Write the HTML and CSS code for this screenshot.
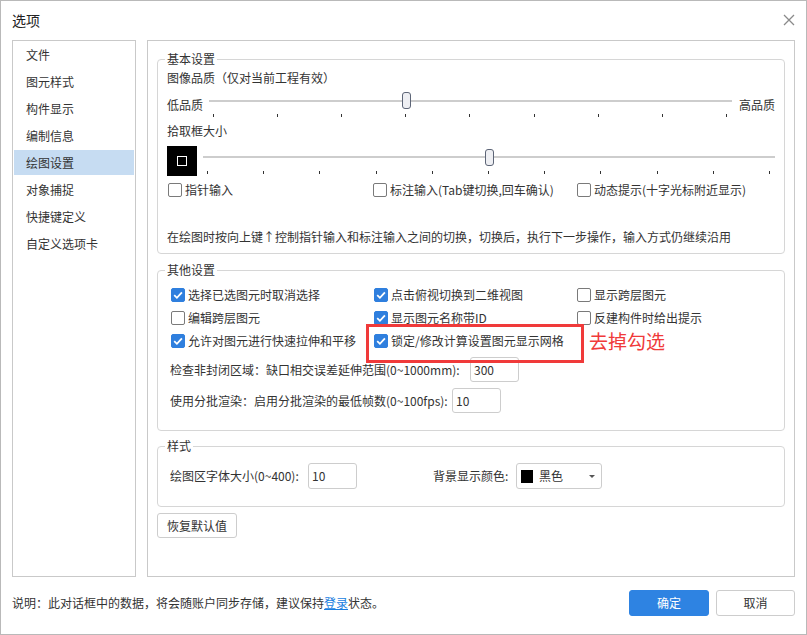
FILE: index.html
```html
<!DOCTYPE html>
<html lang="zh-CN">
<head>
  <meta charset="UTF-8">
  <title>选项</title>
  <link rel="stylesheet" href="styles.css">
</head>
<body>
  <div class="dialog">
    <div class="titlebar">
      <span class="title">选项</span>
      <svg class="close" width="12" height="12" viewBox="0 0 12 12"><path d="M1 1L11 11M11 1L1 11" stroke="#8a8a8a" stroke-width="1.3" fill="none"/></svg>
    </div>

    <div class="main">
      <ul class="nav">
        <li>文件</li>
        <li>图元样式</li>
        <li>构件显示</li>
        <li>编制信息</li>
        <li class="active">绘图设置</li>
        <li>对象捕捉</li>
        <li>快捷键定义</li>
        <li>自定义选项卡</li>
      </ul>

      <div class="panel">
        <fieldset class="group group-basic">
          <legend>基本设置</legend>
          <div class="caption">图像品质（仅对当前工程有效）</div>
          <div class="slider-row row-quality">
            <span class="side">低品质</span>
            <div class="slider">
              <div class="track"></div>
              <div class="ticks">
                <span class="thumb" style="left: 37.5%"></span>
                <i></i><i></i><i></i><i></i><i></i><i></i><i></i><i></i><i></i>
              </div>
            </div>
            <span class="side">高品质</span>
          </div>
          <div class="caption caption-pick">拾取框大小</div>
          <div class="slider-row row-pick">
            <span class="pick-box"><span></span></span>
            <div class="slider">
              <div class="track"></div>
              <div class="ticks">
                <span class="thumb" style="left: 50%"></span>
                <i></i><i></i><i></i><i></i><i></i><i></i><i></i><i></i><i></i><i></i><i></i>
              </div>
            </div>
          </div>
          <div class="checks checks-basic">
            <label class="check"><span class="cb"></span>指针输入</label>
            <label class="check"><span class="cb"></span>标注输入(Tab键切换,回车确认)</label>
            <label class="check"><span class="cb"></span>动态提示(十字光标附近显示)</label>
          </div>
          <div class="note">在绘图时按向上键↑控制指针输入和标注输入之间的切换，切换后，执行下一步操作，输入方式仍继续沿用</div>
        </fieldset>

        <fieldset class="group group-other">
          <legend>其他设置</legend>
          <div class="checks checks-other">
            <label class="check"><span class="cb on"></span>选择已选图元时取消选择</label>
            <label class="check"><span class="cb on"></span>点击俯视切换到二维视图</label>
            <label class="check"><span class="cb"></span>显示跨层图元</label>
            <label class="check"><span class="cb"></span>编辑跨层图元</label>
            <label class="check"><span class="cb on"></span>显示图元名称带ID</label>
            <label class="check"><span class="cb"></span>反建构件时给出提示</label>
            <label class="check"><span class="cb on"></span>允许对图元进行快速拉伸和平移</label>
            <label class="check marked"><span class="cb on"></span>锁定/修改计算设置图元显示网格</label>
            <span class="remark">去掉勾选</span>
          </div>
          <div class="field field-gap">
            <span class="label">检查非封闭区域：缺口相交误差延伸范围(0~1000mm):</span>
            <span class="input">300</span>
          </div>
          <div class="field field-batch">
            <span class="label">使用分批渲染：启用分批渲染的最低帧数(0~100fps):</span>
            <span class="input">10</span>
          </div>
        </fieldset>

        <fieldset class="group group-style">
          <legend>样式</legend>
          <div class="style-row">
            <div class="field field-font">
              <span class="label">绘图区字体大小(0~400):</span>
              <span class="input">10</span>
            </div>
            <div class="field field-color">
              <span class="label">背景显示颜色:</span>
              <span class="select"><span class="swatch"></span>黑色<span class="caret"></span></span>
            </div>
          </div>
        </fieldset>

        <button class="btn btn-reset">恢复默认值</button>
      </div>
    </div>

    <div class="footer">
      <span class="hint">说明：此对话框中的数据，将会随账户同步存储，建议保持<a href="#">登录</a>状态。</span>
      <div class="actions">
        <button class="btn btn-primary">确定</button>
        <button class="btn">取消</button>
      </div>
    </div>
  </div>
</body>
</html>
```

FILE: styles.css
```css
* {
  box-sizing: border-box;
}
body {
  margin: 0;
  background: #fff;
  font-family: "Noto Sans CJK SC", "Microsoft YaHei", sans-serif;
  font-size: 12px;
  line-height: 16px;
  color: #333;
}
.dialog {
  width: 807px;
  height: 635px;
  border: 1px solid #b9b9b9;
  display: flex;
  flex-direction: column;
}
.titlebar {
  height: 39px;
  display: flex;
  align-items: center;
  justify-content: space-between;
  padding: 0 11px 1px 11px;
}
.title {
  font-size: 14px;
  line-height: 18px;
  color: #222;
}
.close {
  margin-top: -1px;
}
.main {
  height: 537px;
  display: flex;
  gap: 11px;
  padding-left: 11px;
}
.nav {
  list-style: none;
  margin: 0;
  padding: 1px 0 0;
  width: 124px;
  border: 1px solid #c9c9c9;
}
.nav li {
  height: 25px;
  line-height: 25px;
  margin: 0 1px 2px;
  padding-left: 12px;
}
.nav li.active {
  background: #c6dcf2;
}
.panel {
  width: 648px;
  border: 1px solid #c9c9c9;
  padding: 10px 9px 0;
}
.group {
  margin: 0;
  padding: 0 9px;
  border: 1px solid #d6d6d6;
  border-radius: 4px;
  min-width: 0;
}
.group legend {
  padding: 0 2px;
  margin-left: -2px;
  line-height: 16px;
}
.group-basic {
  padding-bottom: 8px;
}
.caption {
  margin-top: 3px;
}
.caption-pick {
  margin-top: 6px;
}
.slider-row {
  display: flex;
  align-items: flex-start;
}
.row-quality {
  margin-top: 2px;
  gap: 6px;
}
.row-quality .side {
  padding-top: 9px;
}
.row-quality .side:last-child {
  margin-left: 1px;
}
.row-pick {
  margin-top: 7px;
  gap: 6px;
}
.slider {
  flex: 1;
}
.row-quality .slider {
  padding-top: 12px;
}
.row-pick .slider {
  padding-top: 10px;
}
.track {
  height: 2px;
  background: #cdcdcd;
}
.ticks {
  position: relative;
  display: flex;
  justify-content: space-between;
  margin: 12px 5px 0 4px;
}
.row-pick .ticks {
  margin-top: 13px;
}
.ticks i {
  width: 1px;
  height: 3px;
  background: #333;
}
.thumb {
  position: absolute;
  top: -22px;
  width: 9px;
  height: 17px;
  margin-left: -4px;
  border: 1px solid #5d6577;
  border-radius: 3px;
  background: #eeeff3;
}
.pick-box {
  width: 30px;
  height: 30px;
  background: #000;
  display: flex;
  align-items: center;
  justify-content: center;
}
.pick-box span {
  width: 10px;
  height: 10px;
  border: 1px solid #fff;
}
.checks {
  display: grid;
}
.checks-basic {
  margin: 6px 0 0 1px;
  grid-template-columns: 205px 204px auto;
}
.checks-other {
  margin: 9px 0 0 4px;
  grid-template-columns: 203px 203px auto;
  row-gap: 7px;
}
.check {
  display: flex;
  align-items: center;
  gap: 3px;
  white-space: nowrap;
}
.cb {
  width: 14px;
  height: 14px;
  border: 1px solid #7a7a7a;
  border-radius: 2px;
  background: #fff;
  flex: none;
}
.cb.on {
  border-color: #2f7fde;
  background: #2f7fde url("data:image/svg+xml,%3Csvg xmlns='http://www.w3.org/2000/svg' width='12' height='12' viewBox='0 0 12 12'%3E%3Cpath d='M2.2 6.2L4.9 8.8L9.9 3.3' stroke='white' stroke-width='1.8' fill='none'/%3E%3C/svg%3E") center / 12px 12px no-repeat;
}
.marked {
  position: relative;
}
.marked::after {
  content: "";
  position: absolute;
  left: -8px;
  top: -9px;
  width: 212px;
  height: 33px;
  border: 3px solid #f03a3a;
}
.remark {
  margin-left: 12px;
  font-size: 19px;
  line-height: 16px;
  color: #f03a3a;
}
.note {
  margin-top: 31px;
}
.group-other {
  margin-top: 8px;
  padding-bottom: 17px;
}
.field {
  display: flex;
  align-items: center;
  gap: 3px;
  margin-left: 3px;
  white-space: nowrap;
}
.field-gap {
  margin-top: 8px;
}
.field-gap .label {
  width: 297px;
}
.field-batch {
  margin-top: 6px;
}
.field-batch .label {
  width: 279px;
}
.input {
  height: 25px;
  width: 49px;
  border: 1px solid #cdcdcd;
  border-radius: 3px;
  padding: 0 3px;
  line-height: 23px;
}
.group-style {
  margin-top: 7px;
  padding-bottom: 17px;
}
.style-row {
  display: grid;
  grid-template-columns: 263px auto;
  padding-top: 9px;
  margin-left: 3px;
}
.style-row .field {
  margin-left: 0;
}
.field-font .label {
  width: 135px;
}
.field-color .label {
  width: 80px;
}
.style-row .input {
  height: 26px;
  line-height: 24px;
}
.select {
  position: relative;
  width: 86px;
  height: 26px;
  border: 1px solid #cdcdcd;
  border-radius: 3px;
  display: flex;
  align-items: center;
  padding-left: 4px;
  gap: 6px;
}
.swatch {
  width: 12px;
  height: 13px;
  background: #000;
}
.caret {
  position: absolute;
  right: 6px;
  top: 11px;
  border-left: 3px solid transparent;
  border-right: 3px solid transparent;
  border-top: 3px solid #555;
}
.btn {
  font: inherit;
  color: #333;
  height: 26px;
  width: 79px;
  background: #fff;
  border: 1px solid #cdcdcd;
  border-radius: 3px;
  padding: 0;
  cursor: pointer;
}
.btn-reset {
  margin-top: 6px;
  width: 80px;
  height: 25px;
}
.footer {
  flex: 1;
  display: flex;
  align-items: flex-start;
  justify-content: space-between;
  padding: 13px 11px 0;
}
.hint {
  line-height: 26px;
}
.hint a {
  color: #1a7ee0;
}
.actions {
  display: flex;
  gap: 7px;
}
.btn-primary {
  width: 80px;
  background: #2e83e2;
  border-color: #2e83e2;
  color: #fff;
}
```
